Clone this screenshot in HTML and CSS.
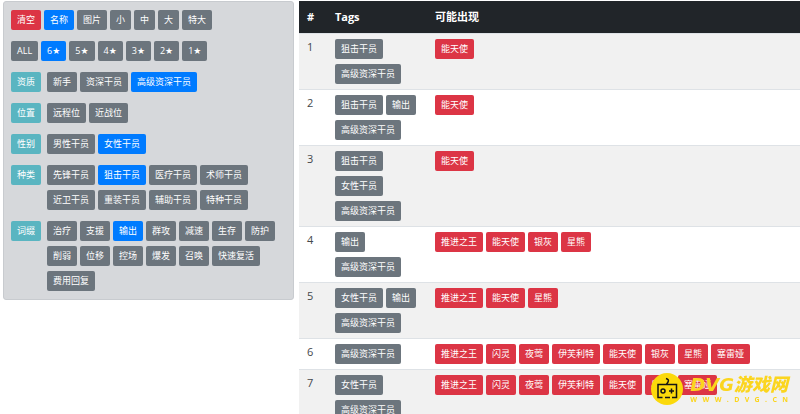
FILE: index.html
```
<!DOCTYPE html>
<html lang="zh-CN">
<head>
  <meta charset="UTF-8">
  <meta name="viewport" content="width=device-width, initial-scale=1.0">
  <title>公开招募计算</title>
  <link rel="stylesheet" href="styles.css">
</head>
<body>
  <div class="container">
    <!-- 筛选 -->
    <div class="filter">
      <div class="btn-list">
        <button type="button" class="btn btn-danger">清空</button>
        <button type="button" class="btn btn-primary">名称</button>
        <button type="button" class="btn">图片</button>
        <button type="button" class="btn">小</button>
        <button type="button" class="btn">中</button>
        <button type="button" class="btn">大</button>
        <button type="button" class="btn">特大</button>
      </div>

      <div class="btn-list stars">
        <button type="button" class="btn">ALL</button>
        <button type="button" class="btn btn-primary">6★</button>
        <button type="button" class="btn">5★</button>
        <button type="button" class="btn">4★</button>
        <button type="button" class="btn">3★</button>
        <button type="button" class="btn">2★</button>
        <button type="button" class="btn">1★</button>
      </div>

      <div class="group">
        <button type="button" class="btn btn-info">资质</button>
        <div class="btn-list">
          <button type="button" class="btn">新手</button>
          <button type="button" class="btn">资深干员</button>
          <button type="button" class="btn btn-primary">高级资深干员</button>
        </div>
      </div>

      <div class="group">
        <button type="button" class="btn btn-info">位置</button>
        <div class="btn-list">
          <button type="button" class="btn">远程位</button>
          <button type="button" class="btn">近战位</button>
        </div>
      </div>

      <div class="group">
        <button type="button" class="btn btn-info">性别</button>
        <div class="btn-list">
          <button type="button" class="btn">男性干员</button>
          <button type="button" class="btn btn-primary">女性干员</button>
        </div>
      </div>

      <div class="group">
        <button type="button" class="btn btn-info">种类</button>
        <div class="btn-list">
          <button type="button" class="btn">先锋干员</button>
          <button type="button" class="btn btn-primary">狙击干员</button>
          <button type="button" class="btn">医疗干员</button>
          <button type="button" class="btn">术师干员</button>
          <button type="button" class="btn">近卫干员</button>
          <button type="button" class="btn">重装干员</button>
          <button type="button" class="btn">辅助干员</button>
          <button type="button" class="btn">特种干员</button>
        </div>
      </div>

      <div class="group">
        <button type="button" class="btn btn-info">词缀</button>
        <div class="btn-list">
          <button type="button" class="btn">治疗</button>
          <button type="button" class="btn">支援</button>
          <button type="button" class="btn btn-primary">输出</button>
          <button type="button" class="btn">群攻</button>
          <button type="button" class="btn">减速</button>
          <button type="button" class="btn">生存</button>
          <button type="button" class="btn">防护</button>
          <button type="button" class="btn">削弱</button>
          <button type="button" class="btn">位移</button>
          <button type="button" class="btn">控场</button>
          <button type="button" class="btn">爆发</button>
          <button type="button" class="btn">召唤</button>
          <button type="button" class="btn">快速复活</button>
          <button type="button" class="btn">费用回复</button>
        </div>
      </div>
    </div>

    <!-- 结果 -->
    <table class="result">
      <thead>
        <tr>
          <th class="col-no">#</th>
          <th class="col-tags">Tags</th>
          <th>可能出现</th>
        </tr>
      </thead>
      <tbody>
        <tr>
          <td>1</td>
          <td>
            <div class="btn-list">
              <button type="button" class="btn">狙击干员</button>
              <button type="button" class="btn">高级资深干员</button>
            </div>
          </td>
          <td>
            <div class="btn-list">
              <button type="button" class="btn btn-danger">能天使</button>
            </div>
          </td>
        </tr>
        <tr>
          <td>2</td>
          <td>
            <div class="btn-list">
              <button type="button" class="btn">狙击干员</button>
              <button type="button" class="btn">输出</button>
              <button type="button" class="btn">高级资深干员</button>
            </div>
          </td>
          <td>
            <div class="btn-list">
              <button type="button" class="btn btn-danger">能天使</button>
            </div>
          </td>
        </tr>
        <tr>
          <td>3</td>
          <td>
            <div class="btn-list">
              <button type="button" class="btn">狙击干员</button>
              <button type="button" class="btn">女性干员</button>
              <button type="button" class="btn">高级资深干员</button>
            </div>
          </td>
          <td>
            <div class="btn-list">
              <button type="button" class="btn btn-danger">能天使</button>
            </div>
          </td>
        </tr>
        <tr>
          <td>4</td>
          <td>
            <div class="btn-list">
              <button type="button" class="btn">输出</button>
              <button type="button" class="btn">高级资深干员</button>
            </div>
          </td>
          <td>
            <div class="btn-list">
              <button type="button" class="btn btn-danger">推进之王</button>
              <button type="button" class="btn btn-danger">能天使</button>
              <button type="button" class="btn btn-danger">银灰</button>
              <button type="button" class="btn btn-danger">星熊</button>
            </div>
          </td>
        </tr>
        <tr>
          <td>5</td>
          <td>
            <div class="btn-list">
              <button type="button" class="btn">女性干员</button>
              <button type="button" class="btn">输出</button>
              <button type="button" class="btn">高级资深干员</button>
            </div>
          </td>
          <td>
            <div class="btn-list">
              <button type="button" class="btn btn-danger">推进之王</button>
              <button type="button" class="btn btn-danger">能天使</button>
              <button type="button" class="btn btn-danger">星熊</button>
            </div>
          </td>
        </tr>
        <tr>
          <td>6</td>
          <td>
            <div class="btn-list">
              <button type="button" class="btn">高级资深干员</button>
            </div>
          </td>
          <td>
            <div class="btn-list">
              <button type="button" class="btn btn-danger">推进之王</button>
              <button type="button" class="btn btn-danger">闪灵</button>
              <button type="button" class="btn btn-danger">夜莺</button>
              <button type="button" class="btn btn-danger">伊芙利特</button>
              <button type="button" class="btn btn-danger">能天使</button>
              <button type="button" class="btn btn-danger">银灰</button>
              <button type="button" class="btn btn-danger">星熊</button>
              <button type="button" class="btn btn-danger">塞雷娅</button>
            </div>
          </td>
        </tr>
        <tr>
          <td>7</td>
          <td>
            <div class="btn-list">
              <button type="button" class="btn">女性干员</button>
              <button type="button" class="btn">高级资深干员</button>
            </div>
          </td>
          <td>
            <div class="btn-list">
              <button type="button" class="btn btn-danger">推进之王</button>
              <button type="button" class="btn btn-danger">闪灵</button>
              <button type="button" class="btn btn-danger">夜莺</button>
              <button type="button" class="btn btn-danger">伊芙利特</button>
              <button type="button" class="btn btn-danger">能天使</button>
              <button type="button" class="btn btn-danger">星熊</button>
              <button type="button" class="btn btn-danger">塞雷娅</button>
            </div>
          </td>
        </tr>
      </tbody>
    </table>
  </div>

  <!-- 水印 -->
  <div class="watermark">
    <svg class="watermark-icon" viewBox="0 0 32 32" aria-hidden="true">
      <circle cx="16" cy="16" r="16" fill="#fbd90b"/>
      <g fill="none" stroke="#151515" stroke-width="1.5">
        <path d="M15 5.500q3.500 1 2 3.500l-1.500 2.500"/>
        <path d="M11.500 24.500H7V11.500h18.500v13H21M14 24.500h5"/>
        <circle cx="12" cy="18" r="2"/>
        <path d="M18 18h5M20.500 15.500v5"/>
      </g>
    </svg>
    <div class="watermark-text">
      <span class="watermark-name">DVG游戏网</span>
      <span class="watermark-url"><span>W</span><span>W</span><span>W</span><span>.</span><span>D</span><span>V</span><span>G</span><span>.</span><span>C</span><span>N</span></span>
    </div>
  </div>
</body>
</html>
```
FILE: styles.css
```
* {
  box-sizing: border-box;
}

body {
  margin: 0;
  font-family: "Open Sans", "Noto Sans CJK SC", sans-serif;
  font-size: 11px;
  line-height: 16px;
  color: #212529;
  background-color: #fff;
}

.container {
  display: grid;
  grid-template-columns: 36.5% 1fr;
  gap: 5px;
  align-items: start;
  padding: 1px 0 0 3px;
}

.filter {
  display: flex;
  flex-direction: column;
  gap: 11px;
  padding: 8px 7px;
  background-color: #d6d8db;
  border: 1px solid #c8cbcf;
  border-radius: 3px;
}

.group {
  display: grid;
  grid-template-columns: auto 1fr;
  gap: 6px;
  align-items: start;
}

.btn-list {
  display: flex;
  flex-wrap: wrap;
  gap: 5px 3px;
}

.stars {
  font-family: "Open Sans", "DejaVu Sans", sans-serif;
}

.btn {
  height: 20px;
  padding: 0 6px;
  font-family: inherit;
  font-size: 9px;
  line-height: 20px;
  color: #fff;
  white-space: nowrap;
  background-color: #6c757d;
  border: none;
  border-radius: 2px;
  cursor: pointer;
}

.btn-primary {
  background-color: #007bff;
}

.btn-danger {
  background-color: #dc3545;
}

.btn-info {
  background-color: #5ab5c1;
}

.result {
  width: 100%;
  table-layout: fixed;
  border-collapse: separate;
  border-spacing: 0;
}

.result th {
  padding: 8px;
  text-align: left;
  color: #fff;
  background-color: #212529;
}

.result td {
  padding: 5px 8px;
  vertical-align: top;
  color: #44484c;
  border-top: 1px solid #dee2e6;
}

.result tbody tr:nth-child(odd) {
  background-color: #f1f1f1;
}

.col-no {
  width: 28px;
}

.col-tags {
  width: 100px;
}

.watermark {
  position: fixed;
  right: 12px;
  bottom: 9px;
  display: flex;
  align-items: center;
  gap: 7px;
  color: #fbd51e;
}

.watermark-icon {
  width: 32px;
  height: 32px;
}

.watermark-text {
  display: flex;
  flex-direction: column;
}

.watermark-name {
  font-family: "DejaVu Sans", "Noto Sans CJK SC", sans-serif;
  font-size: 18px;
  font-style: italic;
  font-weight: 900;
  line-height: 22px;
}

.watermark-url {
  display: flex;
  justify-content: space-between;
  font-size: 7px;
  font-weight: bold;
  line-height: 8px;
}
```
